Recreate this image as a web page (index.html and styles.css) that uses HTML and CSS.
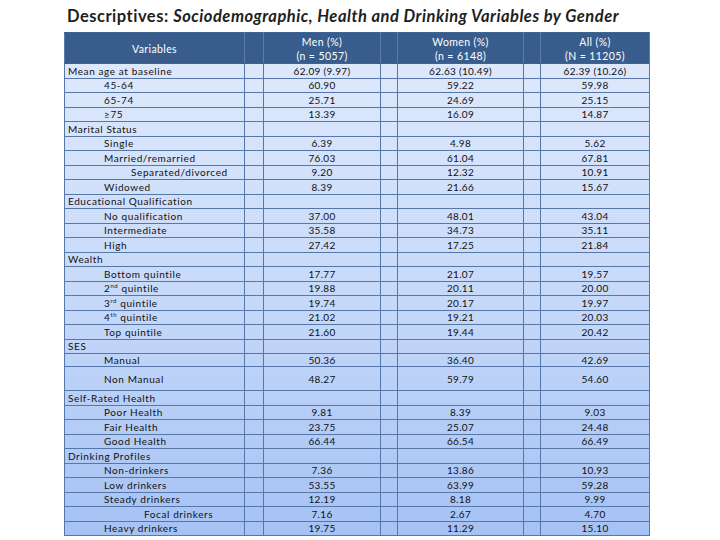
FILE: index.html
```html
<!DOCTYPE html>
<html>
<head>
<meta charset="utf-8">
<link rel="stylesheet" href="styles.css">
</head>
<body>
<div class="page">
  <h1 class="title">Descriptives: <em>Sociodemographic, Health and Drinking Variables by Gender</em></h1>
  <table class="desc">
    <colgroup>
      <col class="c-var"><col class="c-gap1"><col class="c-men"><col class="c-gap"><col class="c-women"><col class="c-gap"><col class="c-all">
    </colgroup>
    <thead>
      <tr>
        <th class="h-var">Variables</th><th></th>
        <th>Men (%)<br>(n = 5057)</th><th></th>
        <th>Women (%)<br>(n = 6148)</th><th></th>
        <th>All (%)<br>(N = 11205)</th>
      </tr>
    </thead>
    <tbody>
      <tr><td class="v">Mean age at baseline</td><td></td><td>62.09 (9.97)</td><td></td><td>62.63 (10.49)</td><td></td><td>62.39 (10.26)</td></tr>
      <tr><td class="v i1">45-64</td><td></td><td>60.90</td><td></td><td>59.22</td><td></td><td>59.98</td></tr>
      <tr><td class="v i1">65-74</td><td></td><td>25.71</td><td></td><td>24.69</td><td></td><td>25.15</td></tr>
      <tr><td class="v i1">≥75</td><td></td><td>13.39</td><td></td><td>16.09</td><td></td><td>14.87</td></tr>
      <tr><td class="v">Marital Status</td><td></td><td></td><td></td><td></td><td></td><td></td></tr>
      <tr><td class="v i1">Single</td><td></td><td>6.39</td><td></td><td>4.98</td><td></td><td>5.62</td></tr>
      <tr><td class="v i1">Married/remarried</td><td></td><td>76.03</td><td></td><td>61.04</td><td></td><td>67.81</td></tr>
      <tr><td class="v i2">Separated/divorced</td><td></td><td>9.20</td><td></td><td>12.32</td><td></td><td>10.91</td></tr>
      <tr><td class="v i1">Widowed</td><td></td><td>8.39</td><td></td><td>21.66</td><td></td><td>15.67</td></tr>
      <tr><td class="v">Educational Qualification</td><td></td><td></td><td></td><td></td><td></td><td></td></tr>
      <tr><td class="v i1">No qualification</td><td></td><td>37.00</td><td></td><td>48.01</td><td></td><td>43.04</td></tr>
      <tr><td class="v i1">Intermediate</td><td></td><td>35.58</td><td></td><td>34.73</td><td></td><td>35.11</td></tr>
      <tr><td class="v i1">High</td><td></td><td>27.42</td><td></td><td>17.25</td><td></td><td>21.84</td></tr>
      <tr><td class="v">Wealth</td><td></td><td></td><td></td><td></td><td></td><td></td></tr>
      <tr><td class="v i1">Bottom quintile</td><td></td><td>17.77</td><td></td><td>21.07</td><td></td><td>19.57</td></tr>
      <tr><td class="v i1">2<sup>nd</sup> quintile</td><td></td><td>19.88</td><td></td><td>20.11</td><td></td><td>20.00</td></tr>
      <tr><td class="v i1">3<sup>rd</sup> quintile</td><td></td><td>19.74</td><td></td><td>20.17</td><td></td><td>19.97</td></tr>
      <tr><td class="v i1">4<sup>th</sup> quintile</td><td></td><td>21.02</td><td></td><td>19.21</td><td></td><td>20.03</td></tr>
      <tr><td class="v i1">Top quintile</td><td></td><td>21.60</td><td></td><td>19.44</td><td></td><td>20.42</td></tr>
      <tr><td class="v">SES</td><td></td><td></td><td></td><td></td><td></td><td></td></tr>
      <tr class="r-short"><td class="v i1">Manual</td><td></td><td>50.36</td><td></td><td>36.40</td><td></td><td>42.69</td></tr>
      <tr class="r-tall"><td class="v i1">Non Manual</td><td></td><td>48.27</td><td></td><td>59.79</td><td></td><td>54.60</td></tr>
      <tr><td class="v">Self-Rated Health</td><td></td><td></td><td></td><td></td><td></td><td></td></tr>
      <tr><td class="v i1">Poor Health</td><td></td><td>9.81</td><td></td><td>8.39</td><td></td><td>9.03</td></tr>
      <tr><td class="v i1">Fair Health</td><td></td><td>23.75</td><td></td><td>25.07</td><td></td><td>24.48</td></tr>
      <tr><td class="v i1">Good Health</td><td></td><td>66.44</td><td></td><td>66.54</td><td></td><td>66.49</td></tr>
      <tr><td class="v">Drinking Profiles</td><td></td><td></td><td></td><td></td><td></td><td></td></tr>
      <tr><td class="v i1">Non-drinkers</td><td></td><td>7.36</td><td></td><td>13.86</td><td></td><td>10.93</td></tr>
      <tr><td class="v i1">Low drinkers</td><td></td><td>53.55</td><td></td><td>63.99</td><td></td><td>59.28</td></tr>
      <tr><td class="v i1">Steady drinkers</td><td></td><td>12.19</td><td></td><td>8.18</td><td></td><td>9.99</td></tr>
      <tr><td class="v i3">Focal drinkers</td><td></td><td>7.16</td><td></td><td>2.67</td><td></td><td>4.70</td></tr>
      <tr><td class="v i1">Heavy drinkers</td><td></td><td>19.75</td><td></td><td>11.29</td><td></td><td>15.10</td></tr>
    </tbody>
  </table>
</div>
</body>
</html>
```
FILE: styles.css
```css
html, body {
  margin: 0;
  padding: 0;
  background: #ffffff;
}

.page {
  padding: 6px 0 0 64px;
  font-family: Lato, "Liberation Sans", sans-serif;
}

.title {
  margin: 0 0 6px 3px;
  font-size: 16.5px;
  line-height: 20px;
  font-weight: 700;
  letter-spacing: 0.5px;
  color: #1e1e1e;
  white-space: nowrap;
}

.title em {
  font-style: italic;
}

.desc {
  border-collapse: collapse;
  table-layout: fixed;
  width: 585px;
  border: 1px solid #3e6494;
  background: linear-gradient(to bottom, #e0eafc 0%, #c8daf9 50%, #a5c2f4 100%);
  font-size: 10px;
  color: #111111;
}

.c-var { width: 180px; }
.c-gap1 { width: 19px; }
.c-men { width: 117px; }
.c-gap { width: 17px; }
.c-women { width: 126px; }
.c-all { width: 109px; }

.desc th {
  background: #385d8d;
  color: #ffffff;
  font-weight: 400;
  font-size: 10.5px;
  height: 29px;
  padding: 1px 0 0 0;
  line-height: 14px;
  text-align: center;
  vertical-align: middle;
  border: 1px solid #5b7cab;
  border-top-color: #3e6494;
  border-bottom-color: #3e6494;
  letter-spacing: 0.4px;
}

.desc td {
  height: 13.5px;
  padding: 0;
  line-height: 12px;
  text-align: center;
  vertical-align: middle;
  border: 1px solid #5677a9;
  white-space: nowrap;
  letter-spacing: 0.3px;
}

.desc td.v {
  text-align: left;
  padding-left: 3px;
  letter-spacing: 0.6px;
}

.desc td.i1 { padding-left: 39px; }
.desc td.i2 { padding-left: 66px; }
.desc td.i3 { padding-left: 79px; }

.desc tr.r-short td { height: 12px; }
.desc tr.r-tall td { height: 23px; }

.desc sup {
  font-size: 6px;
  line-height: 0;
  vertical-align: 4px;
}
```
